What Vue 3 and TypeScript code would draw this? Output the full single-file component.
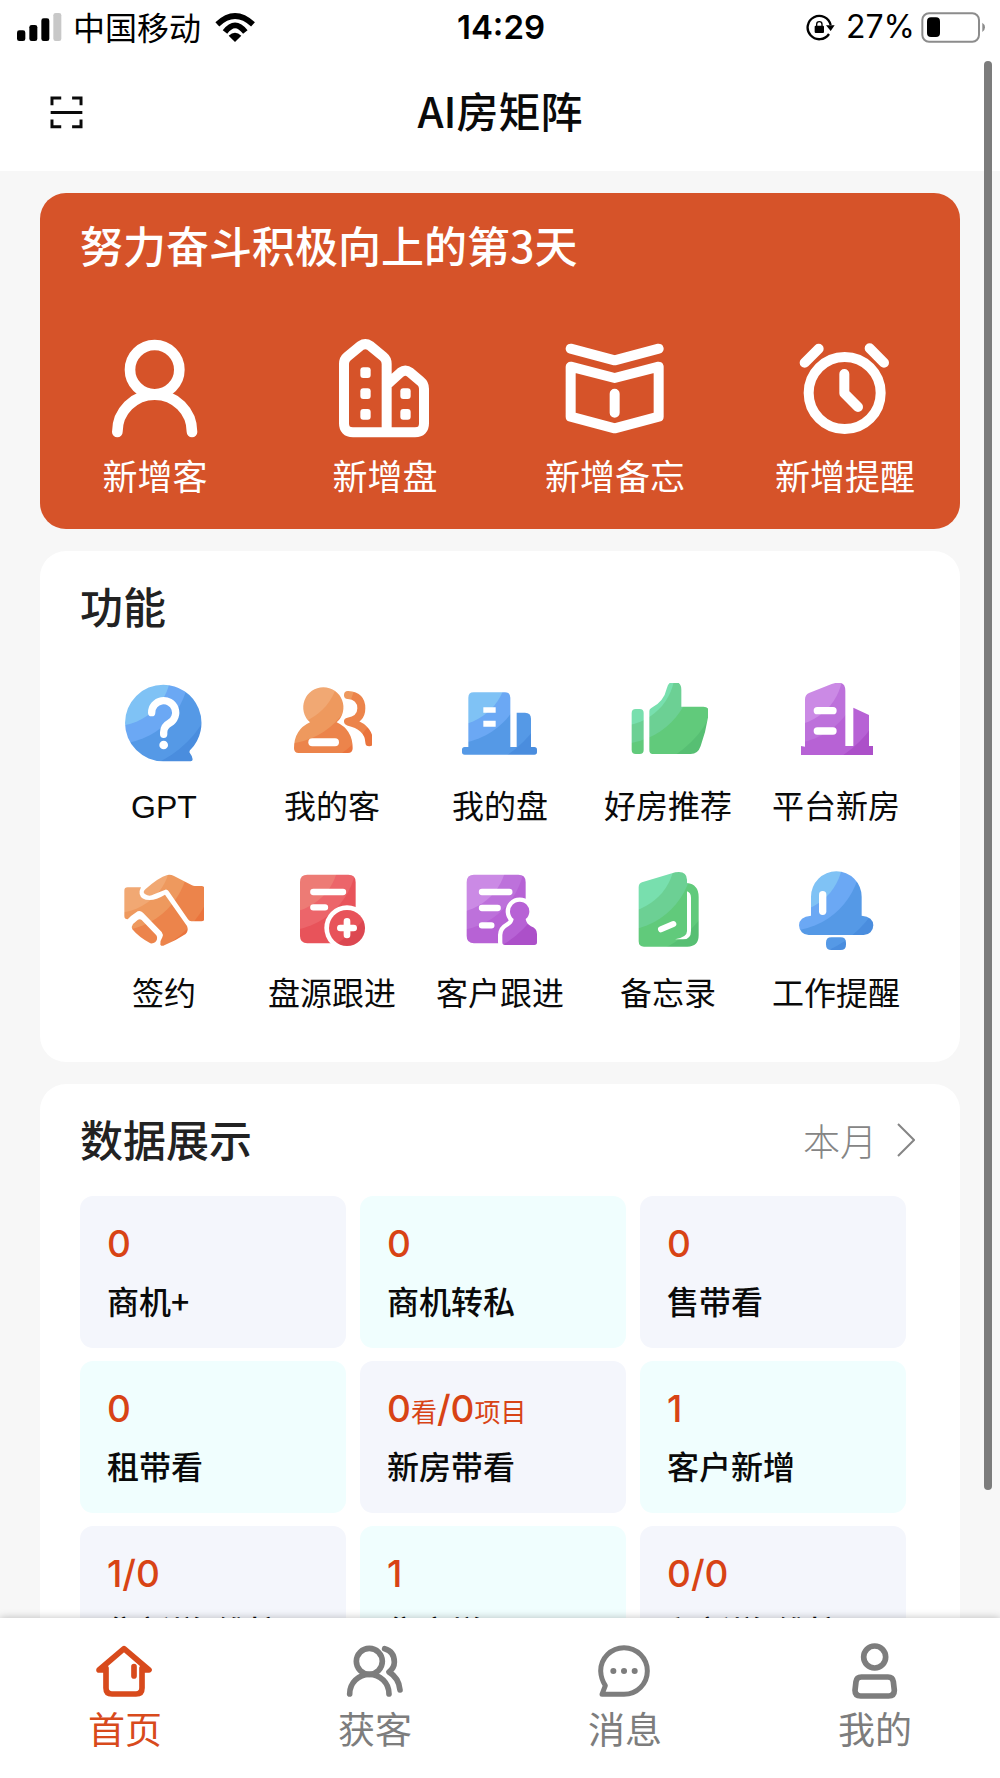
<script setup lang="ts">
import { ref } from 'vue'

interface Layer {
  d: string
  ink: boolean
  width?: number
  solid?: boolean
}

interface Feature {
  id: string
  label: string
  tone: keyof typeof tones
  x: number
  y: number
  layers: Layer[]
}

interface Stat {
  label: string
  value: { text: string; unit?: boolean }[]
}

const tones = {
  blue: ['#7fc2f5', '#6ba8f4', '#5599e6', '#4a8dde'],
  orange: ['#f1a873', '#ee995e', '#ec844b', '#ea743d'],
  green: ['#78dfae', '#6cd094', '#61ca7b', '#57bf73'],
  purple: ['#cb8ae5', '#bd71db', '#b762d5', '#ac50c9'],
  red: ['#ed7b75', '#ec656a', '#e8535a', '#dc4751'],
}

const features: Feature[] = [
  {
    id: 'gpt', label: 'GPT', tone: 'blue', x: 192, y: 339,
    layers: [
      { ink: true, d: 'M310 344a115 115 0 0 1 80 197q-3 5 0 9q8 10 8 18q0 6-6 6H310a115 115 0 0 1 0-230z' },
      { ink: false, width: 22, d: 'M275 428a36 36 0 1 1 54 31q-18 10-18 28v6' },
      { ink: false, width: 26, d: 'M311 525h0.1' },
    ],
  },
  {
    id: 'clients', label: '我的客', tone: 'orange', x: 696, y: 339,
    layers: [
      { ink: true, d: 'M790 352a60 60 0 0 1 40 105q48 22 48 78q0 14-14 14H716q-14 0-14-14q0-56 48-78a60 60 0 0 1 40-105z' },
      { ink: true, width: 24, d: 'M864 375q40 3 40 40q0 34-40 40q62 14 64 62' },
      { ink: false, width: 24, d: 'M757 517H825' },
    ],
  },
  {
    id: 'listings', label: '我的盘', tone: 'blue', x: 60, y: 69,
    layers: [
      { ink: true, d: 'M101 97H195q16 0 16 16V261H230V158H255q18 0 18 18V261H283q8 0 8 8v8q0 7-8 7H74q-8 0-8-7v-8q0-8 8-8H85V113q0-16 16-16z' },
      { ink: false, d: 'M130 142h37v16h-37zM130 182h37v18h-37z' },
    ],
  },
  {
    id: 'recommend', label: '好房推荐', tone: 'green', x: 564, y: 69,
    layers: [
      { ink: true, d: 'M587 147h12q12 0 12 12v111q0 12-12 12h-12q-12 0-12-12V159q0-12 12-12z' },
      { ink: true, d: 'M628 270V153q0-6 6-9q38-20 46-58q4-21 22-21q22 0 22 24v51h66q18 0 16 18q-6 50-24 100q-8 24-30 24H638q-10 0-10-12z' },
    ],
  },
  {
    id: 'new-homes', label: '平台新房', tone: 'purple', x: 1068, y: 69,
    layers: [
      { ink: true, d: 'M1095 260V118q0-14 12-19l68-27q41-14 41 20V258h24V143l47 22V258h12v27H1083V258z' },
      { ink: false, width: 22, d: 'M1132 152H1179M1132 213H1179' },
    ],
  },
  {
    id: 'signing', label: '签约', tone: 'orange', x: 192, y: 60,
    layers: [
      { ink: true, d: 'M203 112H243q-6 12-4 20q4 18 30 18q20 0 46-16l66 94q6 14-4 24q-30 20-64 34q-8 4-12-2q-2-10 6-22q4-8-2-16l-56-58q-8-8-16-4l-20 14q-8 8-10 10q-10 0-10-10V122q0-10 10-10z' },
      { ink: true, d: 'M219 222l14-12q6-4 12 0l44 46q4 6 2 12q-4 14-20 12q-34-18-54-42q-4-8 2-16z' },
      { ink: true, d: 'M256 118q40-36 66-43q10-2 20 3l54 28q4 2 8 2h20q10 0 10 10v86q0 10-10 10H394q-6 0-10-6l-58-84q-4-6-10-5l-34 14q-14 8-26 0q-10-6 0-15z' },
    ],
  },
  {
    id: 'listing-follow', label: '盘源跟进', tone: 'red', x: 696, y: 60,
    layers: [
      { ink: true, d: 'M742 74H865q22 0 22 22V280H742q-22 0-22-22V96q0-22 22-22z' },
      { ink: false, width: 19, d: 'M760 126H849M760 172H795' },
      { ink: false, width: 136, d: 'M861 234h0.1' },
      { ink: true, width: 108, d: 'M861 234h0.1' },
      { ink: false, width: 20, d: 'M841 234H881M861 214V255' },
    ],
  },
  {
    id: 'client-follow', label: '客户跟进', tone: 'purple', x: 60, y: 60,
    layers: [
      { ink: true, d: 'M102 74H235q22 0 22 22V280H102q-22 0-22-22V96q0-22 22-22z' },
      { ink: false, width: 19, d: 'M126 126H208M126 174H173M126 226H154' },
      { ink: false, width: 26, solid: true, d: 'M221 207a29 29 0 1 1 36 0q2 14 16 22q18 6 18 23v25q0 8-8 8h-88q-8 0-8-8v-22q0-16 18-26q14-8 16-22z' },
      { ink: true, d: 'M221 207a29 29 0 1 1 36 0q2 14 16 22q18 6 18 23v25q0 8-8 8h-88q-8 0-8-8v-22q0-16 18-26q14-8 16-22z' },
    ],
  },
  {
    id: 'memos', label: '备忘录', tone: 'green', x: 564, y: 60,
    layers: [
      { ink: true, d: 'M596 112q0-12 10-15l100-30q34-6 35 22v10q35 4 35 42v115q0 34-34 34H612q-16 0-16-16z' },
      { ink: false, d: 'M741 124q12 4 12 20v98q0 26-24 26h-24q36-6 36-24z' },
      { ink: false, width: 18, d: 'M663 238L700 222' },
    ],
  },
  {
    id: 'reminders', label: '工作提醒', tone: 'blue', x: 1068, y: 60,
    layers: [
      { ink: true, d: 'M1113 197v-57a76 76 0 0 1 152 0v57q35 4 35 29a29 29 0 0 1-29 29h-165a29 29 0 0 1-29-29q0-25 36-29z' },
      { ink: true, d: 'M1174 262h28q16 0 16 16v6q0 16-16 16h-28q-16 0-16-16v-6q0-16 16-16z' },
      { ink: false, width: 22, d: 'M1148 134V184' },
    ],
  },
]

const stats: Stat[] = [
  { label: '商机+', value: [{ text: '0' }] },
  { label: '商机转私', value: [{ text: '0' }] },
  { label: '售带看', value: [{ text: '0' }] },
  { label: '租带看', value: [{ text: '0' }] },
  {
    label: '新房带看',
    value: [{ text: '0' }, { text: '看', unit: true }, { text: '/0' }, { text: '项目', unit: true }],
  },
  { label: '客户新增', value: [{ text: '1' }] },
  { label: '售新增/维护', value: [{ text: '1/0' }] },
  { label: '售实增', value: [{ text: '1' }] },
  { label: '租新增/维护', value: [{ text: '0/0' }] },
]

const activeTab = ref('home')
</script>

<template>
  <div class="app">
    <div class="status">
      <div class="status-left">
        <svg class="signal" viewBox="51 36 135 84" aria-hidden="true">
          <rect x="51" y="88" width="25" height="32" rx="7" />
          <rect x="88" y="72" width="24" height="48" rx="7" />
          <rect x="124" y="52" width="24" height="68" rx="7" />
          <rect x="160" y="36" width="24" height="84" rx="7" fill="#c8c8c8" />
        </svg>
        <span class="carrier">中国移动</span>
        <svg class="wifi" viewBox="646 38 120 87" aria-hidden="true">
          <g fill="none" stroke="#000" stroke-width="17">
            <path d="M653 72q53-50 107 0" />
            <path d="M676 95q30-40 61 0" />
          </g>
          <path d="M706 125l-19-19q19-18 38 0z" />
        </svg>
      </div>
      <span class="time">14:29</span>
      <div class="status-right">
        <svg class="lock" viewBox="922 40 87 84" aria-hidden="true">
          <path d="M991 103a35 35 0 1 1 5-27" fill="none" stroke="#000" stroke-width="7" />
          <path d="M982 77h26l-12 17z" />
          <path d="M954 79v-5a8 8 0 0 1 16 0v5" fill="none" stroke="#000" stroke-width="4" />
          <rect x="948" y="78" width="28" height="22" rx="3" />
        </svg>
        <span class="percent">27%</span>
        <svg class="battery" viewBox="1263 32 192 93" aria-hidden="true">
          <rect x="1267" y="36" width="170" height="85" rx="20" fill="none" stroke="#8c8c8c" stroke-width="6" />
          <rect x="1281" y="48" width="39" height="59" rx="12" />
          <path d="M1447 64q8 5 8 14t-8 14z" fill="#8c8c8c" />
        </svg>
      </div>
    </div>

    <header class="header">
      <button class="scan" type="button" aria-label="扫一扫">
        <svg viewBox="150 286 100 100" fill="none" stroke="#0a0a0a" stroke-width="9">
          <path d="M184 292H156V314M217 292H244V314M184 379H156V357M217 379H244V357M152 336H248" />
        </svg>
      </button>
      <h1>AI房矩阵</h1>
    </header>

    <main class="content">
      <section class="hero">
        <h2 class="hero-title">努力奋斗积极向上的第3天</h2>
        <div class="quick">
          <button class="quick-item" type="button">
            <svg viewBox="225 474 300 300" stroke-width="32">
              <circle cx="374" cy="569" r="74" />
              <path d="M262 756a112 112 0 0 1 224 0" />
            </svg>
            <span>新增客</span>
          </button>
          <button class="quick-item" type="button">
            <svg viewBox="915 474 300 300" stroke-width="30">
              <path d="M1070 757V552q0-14-10-22l-40-33q-14-9-28 0l-40 33q-10 8-10 22V730q0 27 27 27h186q27 0 27-27V626q0-14-10-22l-32-27q-14-10-28 0l-42 38" />
              <g fill="#fff" stroke="none">
                <rect x="991" y="562" width="31" height="32" rx="9" />
                <rect x="991" y="625" width="31" height="32" rx="9" />
                <rect x="991" y="687" width="31" height="32" rx="9" />
                <rect x="1111" y="625" width="31" height="32" rx="9" />
                <rect x="1111" y="687" width="31" height="32" rx="9" />
              </g>
            </svg>
            <span>新增盘</span>
          </button>
          <button class="quick-item" type="button">
            <svg viewBox="195 474 300 300" stroke-width="30">
              <path d="M212 506L344 541L476 506M212 560L344 594L476 560V710L344 745L212 710zM344 641V698" />
            </svg>
            <span>新增备忘</span>
          </button>
          <button class="quick-item" type="button">
            <svg viewBox="885 474 300 300" stroke-width="30">
              <circle cx="1034" cy="639" r="108" />
              <path d="M1033 582v58l41 41M914 548l42-42M1109 505l43 43" />
            </svg>
            <span>新增提醒</span>
          </button>
        </div>
      </section>

      <section class="card features">
        <h2 class="title">功能</h2>
        <div class="feature-grid">
          <button v-for="f in features" :key="f.id" class="feature" type="button">
            <svg :viewBox="`${f.x} ${f.y} 240 240`" aria-hidden="true">
              <mask :id="`shape-${f.id}`" maskUnits="userSpaceOnUse" :x="f.x" :y="f.y" width="240" height="240">
                <path
                  v-for="(layer, i) in f.layers"
                  :key="i"
                  :d="layer.d"
                  :fill="layer.width && !layer.solid ? 'none' : layer.ink ? '#fff' : '#000'"
                  :stroke="layer.width ? (layer.ink ? '#fff' : '#000') : 'none'"
                  :stroke-width="layer.width ?? 0"
                  stroke-linecap="round"
                  stroke-linejoin="round"
                />
              </mask>
              <g :mask="`url(#shape-${f.id})`">
                <rect :x="f.x" :y="f.y" width="240" height="240" :fill="tones[f.tone][3]" />
                <circle :cx="f.x - 27" :cy="f.y - 39" r="306" :fill="tones[f.tone][2]" />
                <circle :cx="f.x - 27" :cy="f.y - 39" r="222" :fill="tones[f.tone][1]" />
                <circle :cx="f.x - 27" :cy="f.y - 39" r="168" :fill="tones[f.tone][0]" />
              </g>
            </svg>
            <span>{{ f.label }}</span>
          </button>
        </div>
      </section>

      <section class="card data">
        <div class="data-head">
          <h2 class="title">数据展示</h2>
          <button class="period" type="button">
            <span>本月</span>
            <svg viewBox="0 0 18 34" fill="none" stroke="#858585" stroke-width="2" aria-hidden="true">
              <path d="M1 1L17 17L1 33" />
            </svg>
          </button>
        </div>
        <dl class="stats">
          <div v-for="s in stats" :key="s.label" class="stat">
            <dd>
              <span v-for="(part, i) in s.value" :key="i" :class="{ unit: part.unit }">{{ part.text }}</span>
            </dd>
            <dt>{{ s.label }}</dt>
          </div>
        </dl>
      </section>
    </main>

    <nav class="tabs">
      <button class="tab" :class="{ active: activeTab === 'home' }" type="button" @click="activeTab = 'home'">
        <svg viewBox="195 870 180 180" stroke-width="17">
          <path d="M228 960H207L282 896L357 960H337M228 955V1014q0 18 18 18h72q18 0 18-18V955M312 950V978" />
        </svg>
        <span>首页</span>
      </button>
      <button class="tab" :class="{ active: activeTab === 'leads' }" type="button" @click="activeTab = 'leads'">
        <svg viewBox="945 870 180 180" stroke-width="17">
          <circle cx="1018" cy="934" r="39" />
          <path d="M959 1032a59 59 0 0 1 118 0M1064 896q29 8 29 40q0 18-16 30q30 18 33 54" />
        </svg>
        <span>获客</span>
      </button>
      <button class="tab" :class="{ active: activeTab === 'messages' }" type="button" @click="activeTab = 'messages'">
        <svg viewBox="285 870 180 180" stroke-width="15">
          <path d="M372 893a70 70 0 0 1 0 140H306l10-26q-13-20-14-44a70 70 0 0 1 70-70z" />
          <path d="M340 963h0.1M372 963h0.1M404 963h0.1" stroke-width="18" />
        </svg>
        <span>消息</span>
      </button>
      <button class="tab" :class="{ active: activeTab === 'mine' }" type="button" @click="activeTab = 'mine'">
        <svg viewBox="1035 870 180 180" stroke-width="17">
          <circle cx="1124" cy="921" r="33" />
          <path d="M1084 981h80q14 0 16 14l3 26q0 17-17 17h-84q-17 0-17-17l3-26q2-14 16-14z" />
        </svg>
        <span>我的</span>
      </button>
    </nav>

    <div class="scrollbar" aria-hidden="true"></div>
  </div>
</template>

<style>
body {
  margin: 0;
  background: #f7f7f7;
}
</style>

<style scoped>
.app {
  position: relative;
  display: flex;
  flex-direction: column;
  height: 100vh;
  overflow: hidden;
  background: #f7f7f7;
  color: #0a0a0a;
  font-family: "Noto Sans CJK SC", sans-serif;
}

h1,
h2,
dl,
dd,
dt {
  margin: 0;
  font-weight: 500;
}

button {
  padding: 0;
  border: 0;
  background: none;
  color: inherit;
  font: inherit;
  cursor: pointer;
}

svg {
  display: block;
  flex: none;
}

.status {
  display: grid;
  grid-template-columns: 1fr auto 1fr;
  align-items: center;
  flex: none;
  height: 54px;
  padding: 0 15px 0 17px;
  background: #fff;
  color: #000;
  font-size: 32px;
  line-height: 48px;
}

.status-left,
.status-right {
  display: flex;
  align-items: center;
}

.status-right {
  justify-content: flex-end;
}

.signal {
  width: 45px;
  height: 28px;
}

.carrier {
  margin: 0 14px 3px 11px;
}

.wifi {
  width: 40px;
  height: 29px;
}

.time,
.percent {
  font-family: Inter, sans-serif;
}

.time {
  font-size: 33px;
  font-weight: 600;
}

.lock {
  width: 29px;
  height: 28px;
}

.percent {
  margin: 0 6px 0 11px;
}

.battery {
  width: 64px;
  height: 31px;
}

.header {
  display: grid;
  grid-template-columns: 1fr auto 1fr;
  align-items: center;
  flex: none;
  height: 117px;
  padding: 0 50px;
  background: #fff;
}

.scan,
.scan svg {
  width: 33px;
  height: 33px;
}

.header h1 {
  margin-bottom: 6px;
  font-size: 42px;
  line-height: 60px;
}

.content {
  display: flex;
  flex-direction: column;
  flex: 1;
  gap: 22px;
  min-height: 0;
  padding: 22px 40px;
  overflow: hidden;
}

.hero,
.card {
  flex: none;
  border-radius: 26px;
}

.hero {
  padding: 21px 0 29px;
  background: #d65329;
  color: #fff;
}

.hero-title {
  padding: 0 40px;
  font-size: 43px;
  line-height: 60px;
}

.quick {
  display: grid;
  grid-template-columns: repeat(4, 1fr);
  margin-top: 64px;
}

.quick-item {
  display: flex;
  flex-direction: column;
  align-items: center;
  gap: 12px;
  font-size: 35px;
  line-height: 50px;
}

.quick-item svg {
  width: 100px;
  height: 100px;
  fill: none;
  stroke: #fff;
  stroke-linecap: round;
  stroke-linejoin: round;
}

.card {
  background: #fff;
}

.title {
  color: #222;
  font-size: 43px;
  line-height: 60px;
}

.features {
  padding: 24px 40px 46px;
}

.feature-grid {
  display: grid;
  grid-template-columns: repeat(5, 1fr);
  row-gap: 41px;
  margin-top: 48px;
}

.feature {
  display: flex;
  flex-direction: column;
  align-items: center;
  gap: 22px;
  font-family: "Liberation Sans", "Noto Sans CJK SC", sans-serif;
  font-size: 32px;
  line-height: 44px;
  white-space: nowrap;
}

.feature svg {
  width: 80px;
  height: 80px;
}

.data {
  padding: 24px 0 40px 40px;
}

.data-head {
  display: flex;
  align-items: center;
  justify-content: space-between;
  padding-right: 45px;
}

.data-head .title {
  margin-bottom: 4px;
}

.period {
  display: flex;
  align-items: center;
  gap: 20px;
  color: #858585;
  font-size: 37px;
  font-weight: 300;
  line-height: 50px;
}

.period svg {
  width: 18px;
  height: 34px;
}

.stats {
  display: grid;
  grid-template-columns: repeat(3, 1fr);
  gap: 13px 14px;
  margin-top: 24px;
  padding-right: 54px;
}

.stat {
  display: flex;
  flex-direction: column;
  gap: 4px;
  padding: 20px 27px 24px;
  border-radius: 13px;
  background: #f4f6fc;
}

.stat:nth-child(even) {
  background: #f0fefe;
}

.stat dd {
  height: 56px;
  color: #d84315;
  font-family: Inter, "Noto Sans CJK SC", sans-serif;
  font-size: 37px;
  line-height: 56px;
}

.stat .unit {
  font-size: 26px;
  font-weight: 400;
}

.stat dt {
  font-size: 32px;
  line-height: 48px;
  white-space: nowrap;
}

.tabs {
  position: relative;
  display: grid;
  grid-template-columns: repeat(4, 1fr);
  flex: none;
  padding: 22px 0 25px;
  background: #fff;
  box-shadow: 0 0 8px rgba(0, 0, 0, 0.25);
}

.tab {
  display: flex;
  flex-direction: column;
  align-items: center;
  gap: 3px;
  color: #7d7d7d;
  font-size: 37px;
  line-height: 50px;
}

.tab svg {
  width: 60px;
  height: 60px;
  fill: none;
  stroke: currentColor;
  stroke-linecap: round;
  stroke-linejoin: round;
}

.tab.active {
  color: #d84a1c;
}

.scrollbar {
  position: absolute;
  top: 61px;
  right: 8px;
  bottom: 288px;
  width: 8px;
  border-radius: 4px;
  background: #7c7c7c;
}
</style>
